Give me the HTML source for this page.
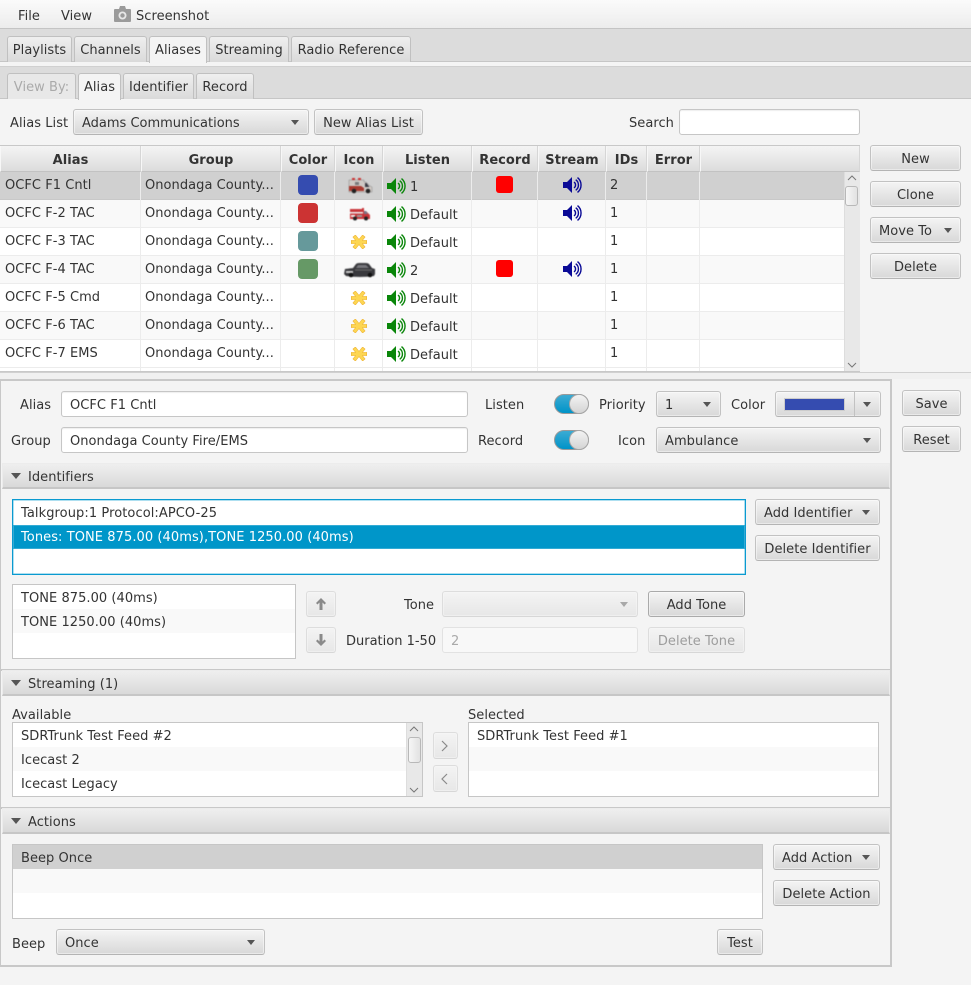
<!DOCTYPE html>
<html><head><meta charset="utf-8"><style>
html,body{margin:0;padding:0}
body{width:971px;height:985px;overflow:hidden;position:relative;background:#f4f4f4;font:13px/16px "DejaVu Sans",sans-serif;color:#333;letter-spacing:.045px}
div,svg{position:absolute;box-sizing:border-box}
.t{white-space:nowrap;height:16px;margin-top:2px}
.u{margin-top:1px}
.h{font-weight:bold;text-align:center;color:#333;white-space:nowrap}
.b{border:1px solid #c2c2c2;border-bottom-color:#b4b4b4;border-radius:3px;background:linear-gradient(#f4f4f4,#d8d8d8);text-align:center;line-height:28px;white-space:nowrap;box-shadow:inset 0 0 0 1px rgba(255,255,255,.45);height:26px}
.l{text-align:left;padding-left:8px}
.d{opacity:.45}
.f{background:#fff;border:1px solid #c6c6c6;border-radius:3px;height:26px;padding-left:8px;line-height:28px;white-space:nowrap;box-shadow:inset 0 1px 1px #eee}
.a{width:0;height:0;border-left:4.5px solid transparent;border-right:4.5px solid transparent;border-top:5px solid #555;margin:0 0 0 1px}
.a.big{border-left-width:5px;border-right-width:5px;border-top-width:6px;margin:-1px 0 0 0}
.tab{border:1px solid #c0c0c0;border-bottom:0;border-radius:3px 3px 0 0;background:linear-gradient(#efefef,#dadada);text-align:center;line-height:27px;white-space:nowrap;height:26px}
.tab.on{background:#f4f4f4}
.ti{left:2px;width:888px;height:26px;background:linear-gradient(#efefef,#d9d9d9);border:1px solid #ececec;border-bottom:2px solid #c6c6c6;padding-left:25px;line-height:28px}
.li{background:#fff;border:1px solid #c6c6c6}
.r{left:0;width:844px;height:28px;border-bottom:1px solid #ececec}
.v{top:172px;width:1px;height:200px;background:#ececec}
.hc{top:146px;height:26px;border-right:1px solid #d6d6d6;border-left:1px solid #f7f7f7;line-height:29px;background:linear-gradient(#f4f4f4,#dcdcdc);border-bottom:1px solid #c2c2c2}
.sw{width:20px;height:20px;border-radius:4px;left:298px}
.rec{left:496px;width:17px;height:17px;background:#f00;border-radius:3px}
.tg{width:35px;height:20px;border-radius:10px;border:1px solid #999;background:linear-gradient(#3cabd3,#0093c8)}
.tg div{right:-1px;top:-1px;width:20px;height:20px;border-radius:10px;border:1px solid #a6a6a6;background:linear-gradient(#f3f3f3,#d4d4d4)}
.ic{filter:blur(.4px)}
</style></head><body>
<svg width="0" height="0" style="left:0;top:0"><defs>
<g id="sp"><path d="M0 5h4l5-5v16l-5-5H0z" fill="currentColor"/><path d="M11 5.100a3.500 3.500 0 0 1 0 5.800M12.700 2.700a6.500 6.500 0 0 1 0 10.600M14.500.6a9.500 9.500 0 0 1 0 14.800" fill="none" stroke="currentColor" stroke-width="1.400"/></g>
<g id="st"><path d="M0 7H16M3 .8L13 13.200M13 .8L3 13.200" stroke="#edb133" stroke-width="3.800" fill="none"/><path d="M.6 7H15.400M3.400 1.300L12.600 12.700M12.600 1.300L3.400 12.700" stroke="#fdd652" stroke-width="2.800" fill="none"/></g>
</defs></svg>

<!-- menu -->
<div style="left:0;top:0;width:971px;height:29px;background:linear-gradient(#fbfbfb,#ececec);border-bottom:1px solid #c4c4c4"></div>
<div class="t" style="left:18px;top:7px">File</div>
<div class="t" style="left:61px;top:7px">View</div>
<svg style="left:113px;top:5px" width="19" height="18"><path d="M1 5q0-1 1-1h4l1-3h5l1 3h4q1 0 1 1v11q0 1-1 1H2q-1 0-1-1z" fill="#9b9b9b"/><circle cx="9.500" cy="10.500" r="4" fill="#e8e8e8"/><circle cx="9.500" cy="10.500" r="2.200" fill="#9b9b9b"/></svg>
<div class="t" style="left:136px;top:7px">Screenshot</div>

<!-- top tabs -->
<div style="left:0;top:29px;width:971px;height:33px;background:#dcdcdc;border-bottom:1px solid #c6c6c6"></div>
<div class="tab" style="left:7px;top:36px;width:65px">Playlists</div>
<div class="tab" style="left:74px;top:36px;width:73px">Channels</div>
<div class="tab on" style="left:149px;top:36px;width:58px;height:27px">Aliases</div>
<div class="tab" style="left:209px;top:36px;width:80px">Streaming</div>
<div class="tab" style="left:291px;top:36px;width:120px">Radio Reference</div>

<!-- sub tabs -->
<div style="left:0;top:66px;width:971px;height:33px;background:#dcdcdc;border-bottom:1px solid #c6c6c6;border-top:1px solid #d0d0d0"></div>
<div class="tab" style="left:7px;top:73px;width:69px;color:#aaa;background:#e8e8e8">View By:</div>
<div class="tab on" style="left:78px;top:73px;width:43px;height:27px">Alias</div>
<div class="tab" style="left:123px;top:73px;width:71px">Identifier</div>
<div class="tab" style="left:196px;top:73px;width:58px">Record</div>

<div class="t" style="left:10px;top:114px">Alias List</div>
<div class="b l" style="left:73px;top:109px;width:236px;letter-spacing:0">Adams Communications</div><div class="a" style="left:290px;top:120px"></div>
<div class="b" style="left:314px;top:109px;width:109px">New Alias List</div>
<div class="t" style="left:629px;top:114px">Search</div>
<div class="f" style="left:679px;top:109px;width:181px"></div>

<!-- table -->
<div style="left:0;top:145px;width:860px;height:227px;background:#fff;border-top:1px solid #c8c8c8"></div>
<div class="hc h" style="left:0;width:141px">Alias</div>
<div class="hc h" style="left:141px;width:140px">Group</div>
<div class="hc h" style="left:281px;width:54px">Color</div>
<div class="hc h" style="left:335px;width:48px">Icon</div>
<div class="hc h" style="left:383px;width:89px">Listen</div>
<div class="hc h" style="left:472px;width:66px">Record</div>
<div class="hc h" style="left:538px;width:68px">Stream</div>
<div class="hc h" style="left:606px;width:41px">IDs</div>
<div class="hc h" style="left:647px;width:53px">Error</div>
<div class="hc" style="left:700px;width:160px"></div>

<div class="r" style="top:172px;background:#d0d0d0;border-bottom-color:#c8c8c8"></div>
<div class="r" style="top:200px;background:#f9f9f9"></div>
<div class="r" style="top:228px;background:#fff"></div>
<div class="r" style="top:256px;background:#f9f9f9"></div>
<div class="r" style="top:284px;background:#fff"></div>
<div class="r" style="top:312px;background:#f9f9f9"></div>
<div class="r" style="top:340px;background:#fff"></div>
<div class="v" style="left:140px"></div><div class="v" style="left:280px"></div><div class="v" style="left:334px"></div><div class="v" style="left:382px"></div><div class="v" style="left:471px"></div><div class="v" style="left:537px"></div><div class="v" style="left:605px"></div><div class="v" style="left:646px"></div><div class="v" style="left:699px"></div>

<div class="t u" style="left:5px;top:177px">OCFC F1 Cntl</div><div class="t u" style="left:145px;top:177px">Onondaga County...</div>
<div class="t u" style="left:5px;top:205px">OCFC F-2 TAC</div><div class="t u" style="left:145px;top:205px">Onondaga County...</div>
<div class="t u" style="left:5px;top:233px">OCFC F-3 TAC</div><div class="t u" style="left:145px;top:233px">Onondaga County...</div>
<div class="t u" style="left:5px;top:261px">OCFC F-4 TAC</div><div class="t u" style="left:145px;top:261px">Onondaga County...</div>
<div class="t u" style="left:5px;top:289px">OCFC F-5 Cmd</div><div class="t u" style="left:145px;top:289px">Onondaga County...</div>
<div class="t u" style="left:5px;top:317px">OCFC F-6 TAC</div><div class="t u" style="left:145px;top:317px">Onondaga County...</div>
<div class="t u" style="left:5px;top:345px">OCFC F-7 EMS</div><div class="t u" style="left:145px;top:345px">Onondaga County...</div>

<div class="sw" style="top:175px;background:#354cb0"></div>
<div class="sw" style="top:203px;background:#cc3333"></div>
<div class="sw" style="top:231px;background:#66999b"></div>
<div class="sw" style="top:259px;background:#669966"></div>

<svg class="ic" style="left:348px;top:178px" width="25" height="16"><path d="M1 2h15v2h2l4 4 2 1v5H1z" fill="#cfc9c4" stroke="#888" stroke-width=".5"/><path d="M4 0h3v2H4zM10 0h3v2h-3z" fill="#c33"/><path d="M1 8h12l3 2v3H1z" fill="#a93a30"/><path d="M17 5h1.500l3 4H17z" fill="#3c3c46"/><path d="M7 4h4v3H7z" fill="#7a7a7a"/><circle cx="6" cy="13" r="2.300" fill="#222"/><circle cx="20" cy="13" r="2.300" fill="#222"/></svg>
<svg class="ic" style="left:349px;top:207px" width="22" height="14"><path d="M1 2h12v-1h2v3h2l3 3 1 1v4H1z" fill="#c9363a"/><path d="M1 5h13v1.500H1zM2 8h4v2H2z" fill="#eee"/><path d="M15 4h2l2 3h-4z" fill="#778"/><path d="M8 8h5v2H8z" fill="#999"/><circle cx="6" cy="11.500" r="2" fill="#222"/><circle cx="17" cy="11.500" r="2" fill="#222"/></svg>
<svg style="left:351px;top:235px" width="16" height="14"><use href="#st"/></svg>
<svg class="ic" style="left:344px;top:262px" width="32" height="16"><path d="M1 7l8-1 3-4q1-1 3-1h7q2 0 3 1l3 4 3 1v5l-1 2q-14 2-28 0l-2-2z" fill="#39393d" stroke="#999" stroke-width=".4"/><path d="M12 6l2-3h8l3 3z" fill="#77777c"/><path d="M2 9h7v2H2z" fill="#c8c8c8"/><path d="M11 8h17" stroke="#6a6a6a"/><circle cx="7" cy="13" r="2.300" fill="#111"/><circle cx="26" cy="13" r="2.300" fill="#111"/></svg>
<svg style="left:351px;top:291px" width="16" height="14"><use href="#st"/></svg>
<svg style="left:351px;top:319px" width="16" height="14"><use href="#st"/></svg>
<svg style="left:351px;top:347px" width="16" height="14"><use href="#st"/></svg>

<svg style="left:387px;top:178px;color:#0a860a" width="19" height="16"><use href="#sp"/></svg><div class="t u" style="left:410px;top:179px">1</div>
<svg style="left:387px;top:206px;color:#0a860a" width="19" height="16"><use href="#sp"/></svg><div class="t u" style="left:410px;top:207px">Default</div>
<svg style="left:387px;top:234px;color:#0a860a" width="19" height="16"><use href="#sp"/></svg><div class="t u" style="left:410px;top:235px">Default</div>
<svg style="left:387px;top:262px;color:#0a860a" width="19" height="16"><use href="#sp"/></svg><div class="t u" style="left:410px;top:263px">2</div>
<svg style="left:387px;top:290px;color:#0a860a" width="19" height="16"><use href="#sp"/></svg><div class="t u" style="left:410px;top:291px">Default</div>
<svg style="left:387px;top:318px;color:#0a860a" width="19" height="16"><use href="#sp"/></svg><div class="t u" style="left:410px;top:319px">Default</div>
<svg style="left:387px;top:346px;color:#0a860a" width="19" height="16"><use href="#sp"/></svg><div class="t u" style="left:410px;top:347px">Default</div>

<div class="rec" style="top:176px"></div><div class="rec" style="top:260px"></div>
<svg style="left:563px;top:177px;color:#0a0a96" width="19" height="16"><use href="#sp"/></svg>
<svg style="left:563px;top:205px;color:#0a0a96" width="19" height="16"><use href="#sp"/></svg>
<svg style="left:563px;top:261px;color:#0a0a96" width="19" height="16"><use href="#sp"/></svg>

<div class="t u" style="left:610px;top:177px">2</div><div class="t u" style="left:610px;top:205px">1</div><div class="t u" style="left:610px;top:233px">1</div><div class="t u" style="left:610px;top:261px">1</div><div class="t u" style="left:610px;top:289px">1</div><div class="t u" style="left:610px;top:317px">1</div><div class="t u" style="left:610px;top:345px">1</div>

<!-- scrollbar -->
<div style="left:844px;top:172px;width:16px;height:200px;background:#e8e8e8;border-left:1px solid #ddd"></div>
<svg style="left:846px;top:174px" width="12" height="8"><path d="M2 6l4-4 4 4" fill="none" stroke="#777"/></svg>
<svg style="left:846px;top:361px" width="12" height="8"><path d="M2 2l4 4 4-4" fill="none" stroke="#777"/></svg>
<div style="left:845px;top:186px;width:13px;height:20px;border:1px solid #b8b8b8;border-radius:3px;background:linear-gradient(90deg,#f6f6f6,#e2e2e2)"></div>

<div class="b" style="left:870px;top:145px;width:91px">New</div>
<div class="b" style="left:870px;top:181px;width:91px">Clone</div>
<div class="b l" style="left:870px;top:217px;width:91px">Move To</div><div class="a" style="left:943px;top:228px"></div>
<div class="b" style="left:870px;top:253px;width:91px">Delete</div>

<!-- dividers -->
<div style="left:0;top:371px;width:860px;height:2px;background:#c8c8c8"></div>
<div style="left:0;top:372px;width:971px;height:1px;background:#d0d0d0"></div>
<div style="left:0;top:373px;width:971px;height:6px;background:#f0f0f0"></div>
<div style="left:0;top:379px;width:892px;height:588px;border:2px solid #c8c8c8;border-left-width:1px;border-top-width:2px;background:#f4f4f4"></div>

<!-- editor -->
<div class="t" style="left:20px;top:396px">Alias</div>
<div class="f" style="left:61px;top:391px;width:407px">OCFC F1 Cntl</div>
<div class="t" style="left:11px;top:432px">Group</div>
<div class="f" style="left:61px;top:427px;width:407px">Onondaga County Fire/EMS</div>
<div class="t" style="left:485px;top:396px">Listen</div>
<div class="t" style="left:478px;top:432px">Record</div>
<div class="tg" style="left:554px;top:394px"><div></div></div>
<div class="tg" style="left:554px;top:430px"><div></div></div>
<div class="t" style="left:599px;top:396px">Priority</div>
<div class="b l" style="left:656px;top:391px;width:65px">1</div><div class="a" style="left:702px;top:402px"></div>
<div class="t" style="left:731px;top:396px">Color</div>
<div class="b" style="left:775px;top:391px;width:106px"></div>
<div style="left:854px;top:392px;width:1px;height:24px;background:#c2c2c2"></div>
<div style="left:784px;top:398px;width:61px;height:13px;background:#354cb0;border:1px solid #ccc"></div>
<div class="a" style="left:862px;top:402px"></div>
<div class="t" style="left:618px;top:432px">Icon</div>
<div class="b l" style="left:656px;top:427px;width:225px">Ambulance</div><div class="a" style="left:862px;top:438px"></div>
<div class="b" style="left:902px;top:390px;width:59px">Save</div>
<div class="b" style="left:902px;top:426px;width:59px">Reset</div>

<!-- identifiers -->
<div class="ti" style="top:463px">Identifiers</div><div class="a big" style="left:11px;top:474px"></div>
<div style="left:12px;top:499px;width:734px;height:76px;background:#fff;border:1px solid #0a9ad0;box-shadow:inset 0 0 0 .5px #5cbfe2"></div>
<div class="t" style="left:21px;top:504px;letter-spacing:.08px">Talkgroup:1 Protocol:APCO-25</div>
<div style="left:13px;top:525px;width:732px;height:24px;background:#0096c9;border:1px solid #33abd4"></div>
<div class="t u" style="left:21px;top:529px;color:#fff;letter-spacing:.07px">Tones: TONE 875.00 (40ms),TONE 1250.00 (40ms)</div>
<div class="b l" style="left:755px;top:499px;width:125px">Add Identifier</div><div class="a" style="left:861px;top:510px"></div>
<div class="b" style="left:755px;top:535px;width:125px">Delete Identifier</div>

<div class="li" style="left:12px;top:584px;width:284px;height:75px"></div>
<div style="left:13px;top:609px;width:282px;height:24px;background:#f9f9f9"></div>
<div class="t u" style="left:21px;top:590px">TONE 875.00 (40ms)</div>
<div class="t u" style="left:21px;top:614px">TONE 1250.00 (40ms)</div>
<div class="b d" style="left:306px;top:591px;width:30px"></div>
<svg style="left:313px;top:597px" width="16" height="14"><path d="M8 1l5 5-1.500 1.500L9.500 5.500V13h-3V5.500L4.500 7.500 3 6z" fill="#8a8a8a"/></svg>
<div class="b d" style="left:306px;top:627px;width:30px"></div>
<svg style="left:313px;top:633px" width="16" height="14"><path d="M8 13l5-5-1.500-1.500-2 2V1h-3v7.500l-2-2L3 8z" fill="#8a8a8a"/></svg>
<div class="t" style="left:404px;top:596px">Tone</div>
<div class="b d" style="left:442px;top:591px;width:196px"></div><div class="a" style="left:619px;top:602px;opacity:.45"></div>
<div class="b" style="left:648px;top:591px;width:97px;border-color:#aaa">Add Tone</div>
<div class="t" style="left:346px;top:632px;letter-spacing:0">Duration 1-50</div>
<div class="f" style="left:442px;top:627px;width:196px;color:#aaa;background:#f8f8f8;border-color:#e2e2e2;box-shadow:none">2</div>
<div class="b d" style="left:648px;top:627px;width:97px">Delete Tone</div>

<!-- streaming -->
<div style="left:1px;top:669px;width:889px;height:2px;background:#c8c8c8"></div>
<div class="ti" style="top:670px">Streaming (1)</div><div class="a big" style="left:11px;top:681px"></div>
<div class="t u" style="left:12px;top:707px">Available</div>
<div class="li" style="left:12px;top:722px;width:411px;height:75px"></div>
<div style="left:13px;top:747px;width:393px;height:24px;background:#f9f9f9"></div>
<div class="t u" style="left:21px;top:728px">SDRTrunk Test Feed #2</div>
<div class="t u" style="left:21px;top:752px">Icecast 2</div>
<div class="t u" style="left:21px;top:776px">Icecast Legacy</div>
<div style="left:406px;top:723px;width:16px;height:73px;background:#e8e8e8;border-left:1px solid #ddd"></div>
<svg style="left:408px;top:725px" width="12" height="8"><path d="M2 6l4-4 4 4" fill="none" stroke="#777"/></svg>
<svg style="left:408px;top:786px" width="12" height="8"><path d="M2 2l4 4 4-4" fill="none" stroke="#777"/></svg>
<div style="left:408px;top:737px;width:13px;height:26px;border:1px solid #b8b8b8;border-radius:3px;background:linear-gradient(90deg,#f6f6f6,#e2e2e2)"></div>
<div class="b d" style="left:433px;top:732px;width:25px;height:27px"></div>
<svg style="left:439px;top:739px" width="12" height="14"><path d="M3 2l5 5-5 5" fill="none" stroke="#8a8a8a" stroke-width="1.200"/></svg>
<div class="b d" style="left:433px;top:765px;width:25px;height:27px"></div>
<svg style="left:439px;top:772px" width="12" height="14"><path d="M8 2L3 7l5 5" fill="none" stroke="#8a8a8a" stroke-width="1.200"/></svg>
<div class="t u" style="left:468px;top:707px">Selected</div>
<div class="li" style="left:468px;top:722px;width:411px;height:75px"></div>
<div style="left:469px;top:747px;width:409px;height:24px;background:#f9f9f9"></div>
<div class="t u" style="left:477px;top:728px">SDRTrunk Test Feed #1</div>

<!-- actions -->
<div style="left:1px;top:807px;width:889px;height:2px;background:#c8c8c8"></div>
<div class="ti" style="top:808px">Actions</div><div class="a big" style="left:11px;top:819px"></div>
<div class="li" style="left:12px;top:844px;width:751px;height:75px"></div>
<div style="left:13px;top:845px;width:749px;height:24px;background:#d0d0d0"></div>
<div style="left:13px;top:869px;width:749px;height:24px;background:#f9f9f9"></div>
<div class="t u" style="left:21px;top:850px">Beep Once</div>
<div class="b l" style="left:773px;top:844px;width:107px">Add Action</div><div class="a" style="left:861px;top:855px"></div>
<div class="b" style="left:773px;top:880px;width:107px">Delete Action</div>
<div class="t" style="left:12px;top:935px">Beep</div>
<div class="b l" style="left:56px;top:929px;width:209px">Once</div><div class="a" style="left:246px;top:940px"></div>
<div class="b" style="left:717px;top:929px;width:46px">Test</div>
</body></html>
